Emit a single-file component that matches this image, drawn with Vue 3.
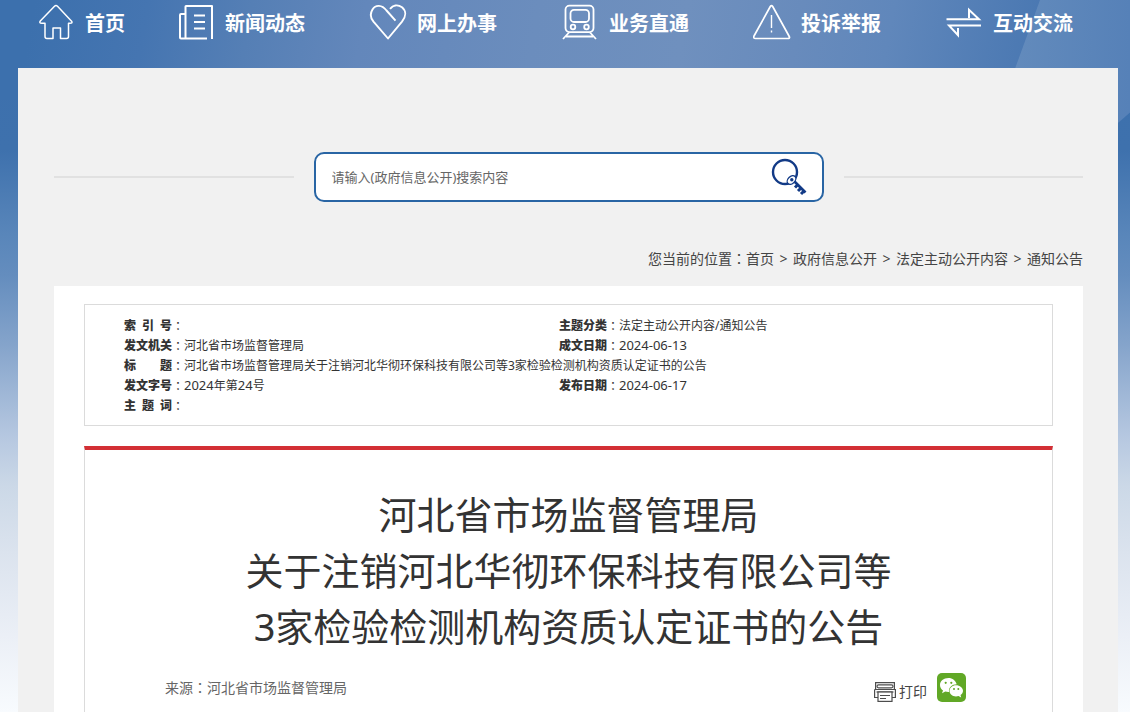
<script setup>
const nav = [
  { label: '首页', icon: 'home' },
  { label: '新闻动态', icon: 'news' },
  { label: '网上办事', icon: 'heart' },
  { label: '业务直通', icon: 'train' },
  { label: '投诉举报', icon: 'alert' },
  { label: '互动交流', icon: 'swap' },
]
const crumbs = ['首页', '政府信息公开', '法定主动公开内容', '通知公告']
</script>

<template>
  <div class="page">
    <nav class="nav">
      <a v-for="n in nav" :key="n.label" href="#" class="nav-item">
        <svg class="nav-icon" width="40" height="40" viewBox="0 0 40 40" fill="none" stroke="#fff" stroke-linejoin="round">
          <path v-if="n.icon === 'home'" stroke-width="1.5" d="M17.5 3.2Q19 1.8 20.5 3.2L34.6 18.2Q36 20.3 33 20.3H31.5V33.5Q31.5 35.5 29.5 35.5H23.5V25H16V35.5H10Q8 35.5 8 33.5V20.3H5Q1.500 20.300 3.500 17.700Z" />
          <g v-else-if="n.icon === 'news'" stroke-width="2">
            <path d="M8.500 35.500V3.500Q8.500 3 9 3H35V36" />
            <path d="M8 11H4Q3 11 3 12V34.500Q3 35.400 4 35.400H30" />
            <path d="M17 12.500H28M17 19H28M17 25.500H28" />
          </g>
          <path v-else-if="n.icon === 'heart'" stroke-width="1.900" d="M26.500 17.700L17.500 7.500C13 1.500 6.500 1.500 3.500 6.500C1 10.500 1.500 15 4.500 18.700L19 35.500L33 18.700C37.500 13 37 7.500 33 4.200C28.500 1 24 2.200 21 5.900" />
          <g v-else-if="n.icon === 'train'" stroke-width="1.800">
            <rect x="4.500" y="2.600" width="28" height="26.500" rx="4" />
            <rect x="9.500" y="6.800" width="18.500" height="12.200" rx="3.500" />
            <circle cx="12" cy="24" r="2.300" /><circle cx="25.500" cy="24" r="2.300" />
            <path d="M8 29.500L2 36M29 29.500L35 36M5 33.500H32" />
          </g>
          <g v-else-if="n.icon === 'alert'" stroke-width="1.700">
            <path d="M17.300 3.500Q18.500 1.700 19.700 3.500L36 33Q37 34.800 36.200 35.200Q35.800 35.500 35 35.500H2.500Q0 35.500 1 33Z" />
            <path stroke-width="1.400" d="M18.500 12V25M18.500 27.500V29.500" />
          </g>
          <g v-else stroke-width="2" stroke-linejoin="miter">
            <path d="M1.500 16.300H34L24 6.800V15" />
            <path d="M36 22.500H4L13 32.300V25" />
          </g>
        </svg>
        <span class="nav-text">{{ n.label }}</span>
      </a>
    </nav>

    <main class="main">
      <form class="search" @submit.prevent>
        <div class="search-box">
          <input type="text" placeholder="请输入(政府信息公开)搜索内容" aria-label="搜索内容" />
          <button type="submit" aria-label="搜索">
            <svg width="38" height="38" viewBox="0 0 38 38" fill="none" stroke="#123a86">
              <circle cx="15" cy="14" r="12" stroke-width="2.400" />
              <path d="M23 22L35.500 34.500" stroke-width="2.600" />
              <path d="M28 26.500L25 29.500M31 30L28 33M34 33L31 36" stroke-width="3" />
              <ellipse cx="21.500" cy="22" rx="5" ry="3.500" transform="rotate(-45 21.500 22)" fill="#fff" stroke-width="1.300" />
              <circle cx="21.800" cy="21.800" r="1.700" fill="#123a86" stroke="none" />
            </svg>
          </button>
        </div>
      </form>

      <div class="crumbs">
        <span>您当前的位置<i class="colon">：</i></span>
        <template v-for="(c, i) in crumbs" :key="c">
          <span v-if="i" class="sep">&gt;</span>
          <a href="#">{{ c }}</a>
        </template>
      </div>

      <section class="panel">
        <div class="info">
          <table>
            <colgroup><col class="c-label" /><col class="c-value" /><col class="c-label" /><col /></colgroup>
            <tbody>
              <tr>
                <th scope="row"><b>索 引 号</b><i class="colon">：</i></th><td></td>
                <th scope="row"><b>主题分类</b><i class="colon">：</i></th><td>法定主动公开内容/通知公告</td>
              </tr>
              <tr>
                <th scope="row"><b>发文机关</b><i class="colon">：</i></th><td>河北省市场监督管理局</td>
                <th scope="row"><b>成文日期</b><i class="colon">：</i></th><td><span class="num">2024-06-13</span></td>
              </tr>
              <tr>
                <th scope="row"><b>标 题</b><i class="colon">：</i></th>
                <td colspan="3">河北省市场监督管理局关于注销河北华彻环保科技有限公司等3家检验检测机构资质认定证书的公告</td>
              </tr>
              <tr>
                <th scope="row"><b>发文字号</b><i class="colon">：</i></th><td><span class="num">2024</span>年第<span class="num">24</span>号</td>
                <th scope="row"><b>发布日期</b><i class="colon">：</i></th><td><span class="num">2024-06-17</span></td>
              </tr>
              <tr>
                <th scope="row"><b>主 题 词</b><i class="colon">：</i></th><td colspan="3"></td>
              </tr>
            </tbody>
          </table>
        </div>

        <article class="article">
          <h1>河北省市场监督管理局<br />关于注销河北华彻环保科技有限公司等<br />3家检验检测机构资质认定证书的公告</h1>
          <div class="meta">
            <span>来源<i class="colon">：</i>河北省市场监督管理局</span>
            <div class="tools">
              <button type="button" class="print">
                <svg width="22" height="20" viewBox="0 0 22 20" fill="none" stroke="#4d4d4d" stroke-width="1.200">
                  <path d="M1.600 7.500V.600H20.400V7.500M.600 7.500H21.400V15.500H18M4 15.500H.600V7.500" />
                  <rect x="3" y="2.800" width="16" height="3" rx="1.500" />
                  <path d="M2.500 10H19.500" />
                  <rect x="4" y="10" width="14" height="9.400" fill="#fff" />
                  <path d="M6 13.500H16M6 16.500H12" />
                </svg>
                <span>打印</span>
              </button>
              <button type="button" class="wechat" aria-label="微信">
                <svg width="29" height="29" viewBox="0 0 29 29">
                  <rect width="29" height="29" rx="5" fill="#61a826" />
                  <path fill="#fff" d="M11.500 5C6.500 5 3 8.200 3 12C3 14.400 4.300 16.200 6 17.400L5 20.300L8.300 18.500Q10 19 12 18.900C11.500 14.500 15 11.400 19.700 11.300C18.700 7.500 15.500 5 11.500 5Z" />
                  <path fill="#fff" d="M19 12.200C15.400 12.200 12.500 14.700 12.500 17.800C12.500 21 15.300 23.500 19 23.500Q20.300 23.500 21.500 23.100L24.200 24.500L23.500 22.100C25 21 26 19.600 26 17.800C26 14.700 22.800 12.200 19 12.200Z" />
                  <g fill="#61a826"><circle cx="8.700" cy="9.800" r="1.100" /><circle cx="14.300" cy="9.800" r="1.100" /><circle cx="17" cy="16" r="1" /><circle cx="21.300" cy="16" r="1" /></g>
                </svg>
              </button>
            </div>
          </div>
        </article>
      </section>
    </main>
  </div>
</template>

<style>
body {
  margin: 0;
}
</style>

<style scoped>
* {
  box-sizing: border-box;
}
.page {
  position: relative;
  isolation: isolate;
  display: flex;
  flex-direction: column;
  min-height: 100vh;
  padding: 0 12px 0 18px;
  color: #333;
  font-family: "Noto Sans", "Noto Sans CJK SC", sans-serif;
  background: linear-gradient(#3c70ad 0, #3e71ad 150px, #5986ba 235px, #648dbe 275px, #85a4cb 345px, #b5c7e0 435px, #cbd8e7 485px, #dbe3ee 552px, #ebeff6 635px, #f8fbfe 712px);
}
.page::before {
  content: "";
  position: absolute;
  inset: 0 0 auto;
  height: 100px;
  z-index: -1;
  background: linear-gradient(100deg, #3c70ad 3%, #4575b1 13%, #557fb5 22%, #6387bb 32%, #6b8dbd 47%, #6f90be 60%, #688bbc 70%, #6087bb 78%, #4a78b2 91%, #4172ae 100%);
}
.page::after {
  content: "";
  position: absolute;
  top: 0;
  right: 0;
  width: 120px;
  height: 125px;
  z-index: -1;
  background: linear-gradient(90deg, #638bbc, #5681b8);
  clip-path: polygon(25% 0, 100% 0, 100% 90%, 88% 100%, 0 100%, 0 66%);
}
a {
  color: inherit;
  text-decoration: none;
}
button {
  padding: 0;
  border: 0;
  background: none;
  font: inherit;
  color: inherit;
}
svg {
  display: block;
}
.colon {
  font-family: "Noto Sans CJK TC", sans-serif;
  font-style: normal;
  font-weight: 400;
  line-height: 1;
}
.nav {
  display: grid;
  grid-template-columns: 140px repeat(4, 1fr) 129px;
  height: 68px;
  padding: 3px 44px 0 19px;
}
.nav-item {
  display: flex;
  align-items: center;
  gap: 8px;
  height: 40px;
  color: #fff;
  font-size: 20px;
  font-weight: 700;
  line-height: 40px;
  white-space: nowrap;
}
.nav-text {
  padding-top: 2px;
}
.main {
  flex: 1;
  display: flex;
  flex-direction: column;
  padding: 84px 35px 0 36px;
  background: #f1f1f1;
}
.search {
  display: flex;
  align-items: center;
  gap: 20px;
}
.search::before,
.search::after {
  content: "";
  flex: 1;
  height: 2px;
  background: #e1e1e1;
}
.search-box {
  display: flex;
  align-items: center;
  width: 510px;
  height: 50px;
  padding: 0 14px 0 16px;
  border: 2px solid #2965a4;
  border-radius: 10px;
  background: #fff;
}
.search-box input {
  flex: 1;
  min-width: 0;
  height: 40px;
  padding: 0;
  border: 0;
  outline: 0;
  background: none;
  font: 13px "Noto Sans", "Noto Sans CJK SC", sans-serif;
  color: #333;
}
.search-box input::placeholder {
  color: #666;
  opacity: 1;
}
.crumbs {
  display: flex;
  justify-content: flex-end;
  height: 22px;
  margin-top: 46px;
  font-size: 14px;
  line-height: 22px;
  color: #444;
}
.sep {
  width: 19px;
  text-align: center;
}
.panel {
  flex: 1;
  display: flex;
  flex-direction: column;
  margin-top: 16px;
  padding: 18px 30px 0;
  background: #fff;
}
.info {
  padding: 11px 39px 9px;
  border: 1px solid #dbdbdb;
}
table {
  width: 100%;
  table-layout: fixed;
  border-collapse: collapse;
  font-size: 12px;
  line-height: 20px;
}
.c-label {
  width: 60px;
}
.c-value {
  width: 375px;
}
th,
td {
  height: 20px;
  padding: 0;
  text-align: left;
  vertical-align: top;
  white-space: nowrap;
}
th {
  display: flex;
}
th b {
  width: 48px;
  text-align-last: justify;
}
th .colon {
  line-height: 20px;
}
.num {
  font-size: 13px;
  line-height: 1;
}
.article {
  flex: 1;
  margin-top: 20px;
  border: 1px solid #dbdbdb;
  border-top: 4px solid #d32f35;
  border-bottom: 0;
}
h1 {
  margin: 36px 0 0;
  font-size: 38px;
  font-weight: 400;
  line-height: 56px;
  text-align: center;
}
.meta {
  display: flex;
  justify-content: space-between;
  margin-top: 19px;
  padding: 0 86px 0 80px;
  font-size: 14px;
  line-height: 30px;
  color: #666;
}
.tools {
  display: flex;
  gap: 10px;
}
.print {
  display: flex;
  align-items: center;
  gap: 3px;
  height: 38px;
  color: #444;
}
.wechat {
  height: 29px;
}
</style>
